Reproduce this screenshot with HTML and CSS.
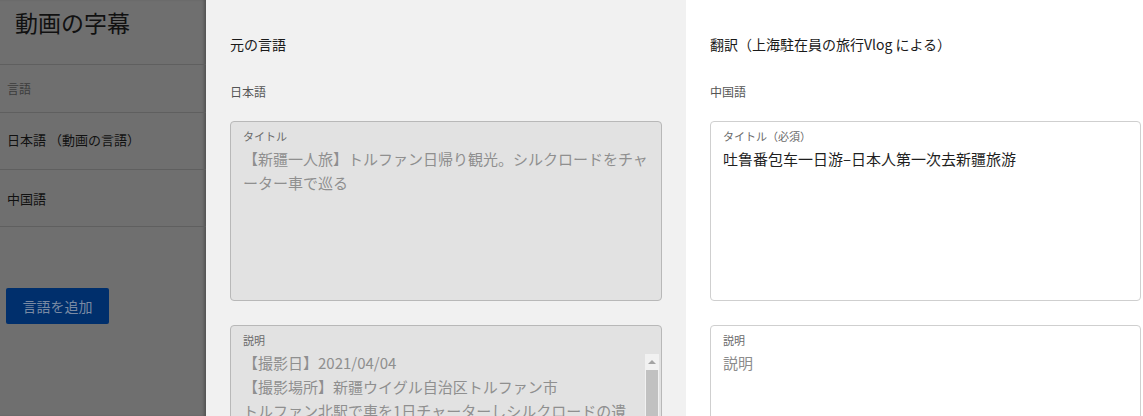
FILE: index.html
```html
<!DOCTYPE html>
<html lang="ja">
<head>
<meta charset="utf-8">
<link rel="stylesheet" href="styles.css">
</head>
<body>
<div class="app">
  <aside class="side">
    <div class="side-title">動画の字幕</div>
    <div class="side-row side-head">言語</div>
    <div class="side-row side-lang">日本語 （動画の言語）</div>
    <div class="side-row side-lang">中国語</div>
    <div class="side-actions"><button class="add-btn">言語を追加</button></div>
  </aside>
  <section class="pane pane-orig">
    <h2 class="pane-title">元の言語</h2>
    <div class="pane-lang">日本語</div>
    <div class="field field-disabled field-title">
      <div class="field-label">タイトル</div>
      <div class="field-text">【新疆一人旅】トルファン日帰り観光。シルクロードをチャーター車で巡る</div>
    </div>
    <div class="field field-disabled field-desc">
      <div class="field-label">説明</div>
      <div class="field-body">
        <div class="field-text">【撮影日】2021/04/04<br>【撮影場所】新疆ウイグル自治区トルファン市<br>トルファン北駅で車を1日チャーターしシルクロードの遺跡を巡りました</div>
        <div class="scrollbar"><div class="scroll-arrow"></div><div class="scroll-thumb"></div></div>
      </div>
    </div>
  </section>
  <section class="pane pane-trans">
    <h2 class="pane-title">翻訳（上海駐在員の旅行Vlog による）</h2>
    <div class="pane-lang">中国語</div>
    <div class="field field-title">
      <div class="field-label">タイトル（必須）</div>
      <div class="field-text field-value">吐鲁番包车一日游–日本人第一次去新疆旅游</div>
    </div>
    <div class="field field-desc">
      <div class="field-label">説明</div>
      <div class="field-text field-placeholder">説明</div>
    </div>
  </section>
</div>
</body>
</html>
```

FILE: styles.css
```css
* { box-sizing: border-box; }
html, body { margin: 0; padding: 0; height: 100%; overflow: hidden; }
body {
  font-family: "Noto Sans CJK JP", "Noto Sans", "Liberation Sans", sans-serif;
  background: #ffffff;
  color: #1a1a1a;
}
.app {
  display: flex;
  width: 1143px;
  height: 416px;
  overflow: hidden;
  align-items: flex-start;
}
.side {
  width: 206px;
  flex: 0 0 206px;
  height: 416px;
  background: #6f6f6f;
  box-shadow: inset -3px 0 3px -1px rgba(0,0,0,0.25);
  display: flex;
  flex-direction: column;
}
.side > * { flex-shrink: 0; }
.side-title {
  height: 65px;
  padding: 6px 0 0 15px;
  font-size: 23px;
  font-weight: 400;
  line-height: 32px;
  color: #111;
  border-bottom: 1px solid #5f5f5f;
}
.side-row {
  display: flex;
  align-items: center;
  padding-left: 7px;
  border-bottom: 1px solid #5f5f5f;
}
.side-head {
  height: 48px;
  font-size: 12px;
  color: #3c3c3c;
}
.side-lang {
  height: 57px;
  font-size: 13px;
  color: #111;
}
.side-lang:nth-child(3) { padding-bottom: 3px; }
.side-actions {
  padding: 61px 0 0 6px;
}
.add-btn {
  width: 103px;
  height: 36px;
  border: 0;
  border-radius: 2px;
  background: #002f6c;
  color: #7a8aa3;
  font-family: inherit;
  font-size: 14px;
  padding: 0;
}
.pane {
  padding: 0 24px;
  display: flex;
  flex-direction: column;
  height: 416px;
}
.pane > * { flex-shrink: 0; }
.pane-orig {
  width: 480px;
  flex: 0 0 480px;
  background: #f1f1f1;
}
.pane-trans {
  flex: 1;
  background: #ffffff;
  padding-right: 2px;
}
.pane-title {
  margin: 0;
  padding-top: 33px;
  height: 79px;
  font-size: 14px;
  font-weight: 400;
  line-height: 22px;
  color: #1a1a1a;
}
.pane-lang {
  height: 42px;
  font-size: 12px;
  line-height: 26px;
  color: #555;
}
.field {
  border: 1px solid #cfcfcf;
  border-radius: 4px;
  background: #fff;
  padding: 6px 0 0 12px;
  overflow: hidden;
}
.field-disabled {
  background: #e2e2e2;
  border-color: #b8b8b8;
}
.field-title {
  height: 180px;
  margin-bottom: 24px;
}
.field-desc {
  height: 200px;
}
.field-label {
  font-size: 11px;
  line-height: 16px;
  color: #6a6a6a;
  margin-bottom: 3px;
}
.field-text {
  font-size: 15px;
  line-height: 24px;
  color: #8f8f8f;
  padding-right: 8px;
}
.field-value { color: #1f1f1f; }
.field-placeholder { color: #8c8c8c; }
.field-body {
  display: flex;
  margin-top: -3px;
}
.field-body .field-text { flex: 1; padding-right: 12px; padding-top: 3px; }
.scrollbar {
  flex: 0 0 14px;
  width: 14px;
  margin-right: 2px;
  margin-top: 6px;
  background: #f1f1f1;
  display: flex;
  flex-direction: column;
  align-items: center;
  height: 150px;
}
.scroll-arrow {
  width: 0; height: 0;
  margin: 6px 0 6px;
  border-left: 4px solid transparent;
  border-right: 4px solid transparent;
  border-bottom: 4px solid #a3a3a3;
}
.scroll-thumb {
  width: 12px;
  flex: 1;
  background: #c1c1c1;
}
```
